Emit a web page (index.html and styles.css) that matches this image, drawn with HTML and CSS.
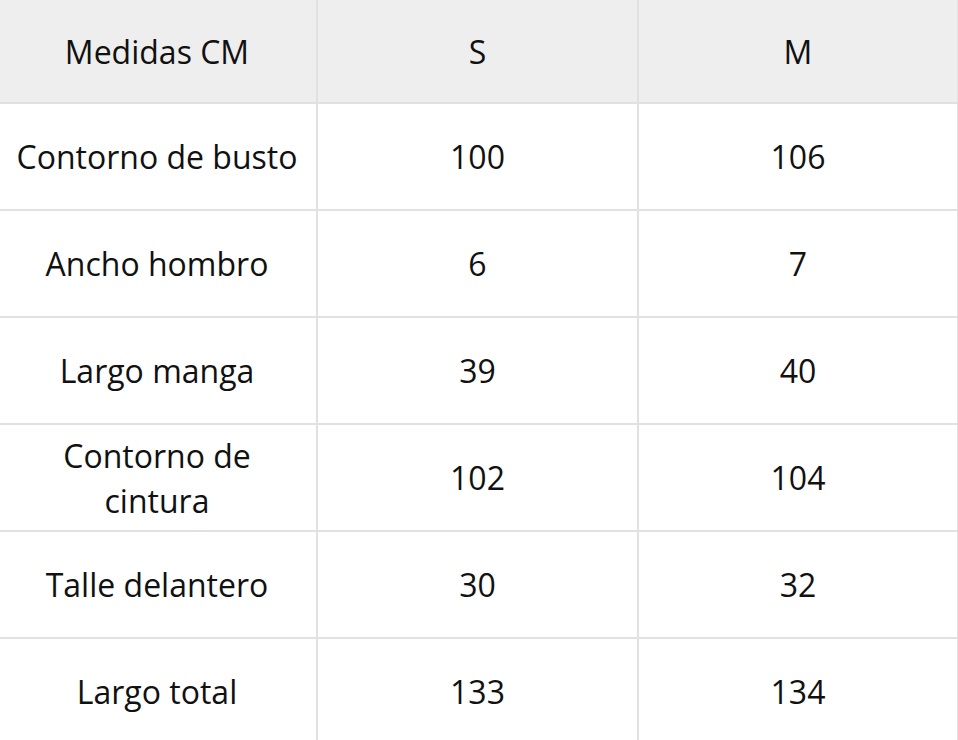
FILE: index.html
```html
<!DOCTYPE html>
<html lang="es">
<head>
<meta charset="utf-8">
<title>Medidas</title>
<link rel="stylesheet" href="styles.css">
</head>
<body>
<div class="size-table">
  <div class="cell head">Medidas CM</div>
  <div class="cell head">S</div>
  <div class="cell head">M</div>

  <div class="cell">Contorno de busto</div>
  <div class="cell">100</div>
  <div class="cell">106</div>

  <div class="cell">Ancho hombro</div>
  <div class="cell">6</div>
  <div class="cell">7</div>

  <div class="cell">Largo manga</div>
  <div class="cell">39</div>
  <div class="cell">40</div>

  <div class="cell">Contorno de<br>cintura</div>
  <div class="cell">102</div>
  <div class="cell">104</div>

  <div class="cell">Talle delantero</div>
  <div class="cell">30</div>
  <div class="cell">32</div>

  <div class="cell">Largo total</div>
  <div class="cell">133</div>
  <div class="cell">134</div>
</div>
</body>
</html>
```
FILE: styles.css
```css
html, body {
  margin: 0;
  padding: 0;
  background: #fff;
  overflow: hidden;
}
.size-table {
  display: grid;
  grid-template-columns: 318px 319px 318px;
  grid-template-rows: 102px repeat(6, 105px);
  gap: 2px;
  padding: 2px;
  background: #e1e1e1;
  margin: -2px 0 0 -4px;
  width: max-content;
  font-family: "Open Sans", "Noto Sans", sans-serif;
  font-size: 32px;
  font-weight: 400;
  line-height: 45px;
  color: #111;
}
.cell {
  background: #fff;
  display: flex;
  align-items: center;
  justify-content: center;
  text-align: center;
}
.cell.head {
  background: #eeeeee;
}
```
